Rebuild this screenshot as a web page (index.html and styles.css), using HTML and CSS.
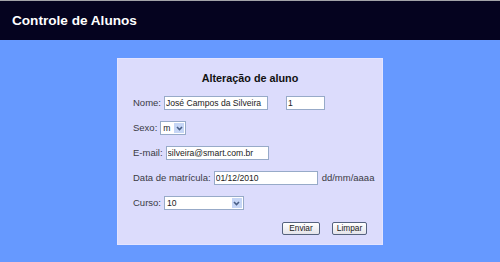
FILE: index.html
```html
<!DOCTYPE html>
<html lang="pt-BR">
<head>
    <meta charset="UTF-8">
    <meta name="viewport" content="width=device-width, initial-scale=1.0">
    <title>Controle de Alunos</title>
    <link rel="stylesheet" href="styles.css">
</head>
<body>
    <header class="topbar">
        <h1>Controle de Alunos</h1>
    </header>

    <main class="page">
        <form class="card" autocomplete="off">
            <h2>Alteração de aluno</h2>

            <div class="row">
                <label for="nome">Nome:</label>
                <input type="text" id="nome" class="w-name" value="José Campos da Silveira" spellcheck="false">
                <input type="text" id="codigo" class="w-id" value="1" spellcheck="false">
            </div>

            <div class="row">
                <label for="sexo">Sexo:</label>
                <span class="select w-sexo">
                    <select id="sexo"><option>m</option><option>f</option></select>
                    <span class="arrow"><svg width="9" height="10" viewBox="0 0 9 10"><path d="M2 4 L4.5 6.5 L7 4" fill="none" stroke="#4a5f86" stroke-width="1.6"/></svg></span>
                </span>
            </div>

            <div class="row">
                <label for="email">E-mail:</label>
                <input type="text" id="email" class="w-mail" value="silveira@smart.com.br" spellcheck="false" readonly>
            </div>

            <div class="row">
                <label for="matricula">Data de matrícula:</label>
                <input type="text" id="matricula" class="w-name" value="01/12/2010" spellcheck="false">
                <span class="hint">dd/mm/aaaa</span>
            </div>

            <div class="row">
                <label for="curso">Curso:</label>
                <span class="select w-curso">
                    <select id="curso"><option>10</option><option>11</option><option>12</option></select>
                    <span class="arrow"><svg width="9" height="10" viewBox="0 0 9 10"><path d="M2 4 L4.5 6.5 L7 4" fill="none" stroke="#4a5f86" stroke-width="1.6"/></svg></span>
                </span>
            </div>

            <div class="row actions">
                <button type="button" class="btn btn-send">Enviar</button>
                <button type="reset" class="btn btn-clear">Limpar</button>
            </div>
        </form>
    </main>
</body>
</html>
```

FILE: styles.css
```css
body { margin: 0; background: #6699ff; font-family: "Liberation Sans", Arial, sans-serif; min-height: 262px; }

.topbar { box-sizing: border-box; height: 40px; border-top: 1px solid #a3a3a8; background: #05031f; display: flex; align-items: center; padding: 0 0 0 12px; }
.topbar h1 { margin: 0; color: #fff; font-size: 13.6px; font-weight: bold; }

.page { padding-top: 18px; }
.card { box-sizing: border-box; width: 266px; margin: 0 auto; padding: 12px 15px 3px 15px; background: #dcdcfc; border: 1px solid #e4e4ff; }
.card h2 { margin: 0 0 5px; font-size: 10.8px; line-height: 14px; text-align: center; color: #111; }

.row { display: flex; align-items: center; gap: 3px; height: 25px; font-size: 9.5px; color: #3a3a44; }
.row label { white-space: nowrap; }
.hint { margin-left: 1px; }

input { box-sizing: border-box; height: 14px; padding: 0 1px; border: 1px solid #97aac8; background: #fff; font-family: inherit; font-size: 8.6px; color: #222; }
input::spelling-error, input::grammar-error { text-decoration: none; }
.w-name { width: 104px; }
.w-mail { width: 103px; }
.w-id { width: 39px; margin-left: 15px; }

.select { box-sizing: border-box; display: inline-flex; height: 14px; border: 1px solid #97aac8; background: #fff; }
.select select { appearance: none; -webkit-appearance: none; border: 0; background: transparent; flex: 1; min-width: 0; padding: 0 2px; font-family: inherit; font-size: 8.6px; color: #222; outline: none; }
.select .arrow { width: 10px; margin: 1px; background: #c6d6f6; display: flex; align-items: center; justify-content: center; }
.w-sexo { width: 26px; }
.w-curso { width: 80px; }

.actions { justify-content: flex-end; gap: 12px; margin-top: 1px; }
.btn { box-sizing: border-box; height: 13px; padding: 0; border: 1px solid #55627e; border-radius: 2px; background: linear-gradient(#ffffff, #e4e4ea); font-family: inherit; font-size: 8.3px; color: #222; line-height: 11px; }
.btn-send { width: 38px; }
.btn-clear { width: 35px; }
```
